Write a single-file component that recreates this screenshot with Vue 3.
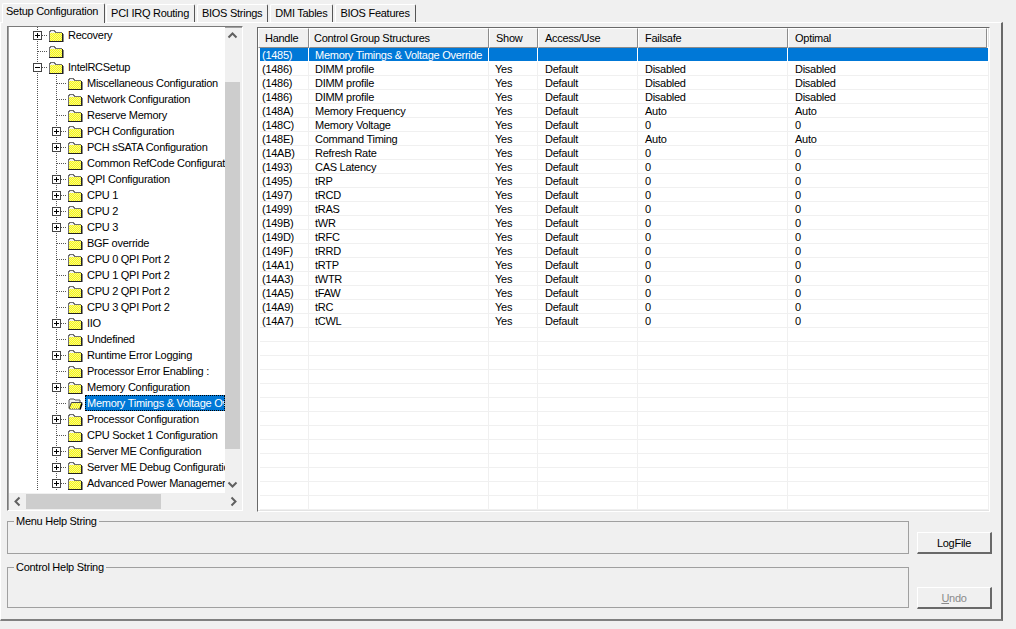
<script setup>
const tabs = ['Setup Configuration', 'PCI IRQ Routing', 'BIOS Strings', 'DMI Tables', 'BIOS Features']

const tree = [
  [1, 'Recovery', '+'],
  [1, '', ''],
  [1, 'IntelRCSetup', '-'],
  [2, 'Miscellaneous Configuration', ''],
  [2, 'Network Configuration', ''],
  [2, 'Reserve Memory', ''],
  [2, 'PCH Configuration', '+'],
  [2, 'PCH sSATA Configuration', '+'],
  [2, 'Common RefCode Configuration', ''],
  [2, 'QPI Configuration', '+'],
  [2, 'CPU 1', '+'],
  [2, 'CPU 2', '+'],
  [2, 'CPU 3', '+'],
  [2, 'BGF override', ''],
  [2, 'CPU 0 QPI Port 2', ''],
  [2, 'CPU 1 QPI Port 2', ''],
  [2, 'CPU 2 QPI Port 2', ''],
  [2, 'CPU 3 QPI Port 2', ''],
  [2, 'IIO', '+'],
  [2, 'Undefined', ''],
  [2, 'Runtime Error Logging', '+'],
  [2, 'Processor Error Enabling :', ''],
  [2, 'Memory Configuration', '+'],
  [2, 'Memory Timings & Voltage Override', '', true],
  [2, 'Processor Configuration', '+'],
  [2, 'CPU Socket 1 Configuration', ''],
  [2, 'Server ME Configuration', '+'],
  [2, 'Server ME Debug Configuration', '+'],
  [2, 'Advanced Power Management Configuration', '+'],
].map(([level, label, exp, selected], id) => ({ id, level, label, exp, selected: !!selected }))

const headers = ['Handle', 'Control Group Structures', 'Show', 'Access/Use', 'Failsafe', 'Optimal']

const data = [
  ['(1485)', 'Memory Timings & Voltage Override', '', '', '', ''],
  ['(1486)', 'DIMM profile', 'Yes', 'Default', 'Disabled', 'Disabled'],
  ['(1486)', 'DIMM profile', 'Yes', 'Default', 'Disabled', 'Disabled'],
  ['(1486)', 'DIMM profile', 'Yes', 'Default', 'Disabled', 'Disabled'],
  ['(148A)', 'Memory Frequency', 'Yes', 'Default', 'Auto', 'Auto'],
  ['(148C)', 'Memory Voltage', 'Yes', 'Default', '0', '0'],
  ['(148E)', 'Command Timing', 'Yes', 'Default', 'Auto', 'Auto'],
  ['(14AB)', 'Refresh Rate', 'Yes', 'Default', '0', '0'],
  ['(1493)', 'CAS Latency', 'Yes', 'Default', '0', '0'],
  ['(1495)', 'tRP', 'Yes', 'Default', '0', '0'],
  ['(1497)', 'tRCD', 'Yes', 'Default', '0', '0'],
  ['(1499)', 'tRAS', 'Yes', 'Default', '0', '0'],
  ['(149B)', 'tWR', 'Yes', 'Default', '0', '0'],
  ['(149D)', 'tRFC', 'Yes', 'Default', '0', '0'],
  ['(149F)', 'tRRD', 'Yes', 'Default', '0', '0'],
  ['(14A1)', 'tRTP', 'Yes', 'Default', '0', '0'],
  ['(14A3)', 'tWTR', 'Yes', 'Default', '0', '0'],
  ['(14A5)', 'tFAW', 'Yes', 'Default', '0', '0'],
  ['(14A9)', 'tRC', 'Yes', 'Default', '0', '0'],
  ['(14A7)', 'tCWL', 'Yes', 'Default', '0', '0'],
]
const rows = [...data, ...Array.from({ length: 13 }, () => ['', '', '', '', '', ''])]

// Checker rows of the folder body: one dashed line per pixel row.
const ditherRows = Array.from({ length: 8 }, (_, i) => `M${2 + (i % 2)} ${4.5 + i}H14`)
const openRows = Array.from({ length: 6 }, (_, i) => `M${5 - Math.floor(i / 2) + (i % 2)} ${6.5 + i}H14`)
</script>

<template>
  <div class="app">
    <nav class="tabs">
      <div v-for="(t, i) in tabs" :key="t" class="tab" :class="{ active: i === 0 }">{{ t }}</div>
    </nav>

    <section class="panel">
      <div class="top">
        <div class="tree">
          <div class="tree-view">
            <div class="tree-body">
              <div v-for="n in tree" :key="n.id" class="node">
                <span v-if="n.level === 2" class="cell guide"></span>
                <span class="cell elbow">
                  <svg v-if="n.exp" class="exp" width="9" height="9" viewBox="0 0 9 9" shape-rendering="crispEdges">
                    <rect x="0.5" y="0.5" width="8" height="8" fill="#fff" stroke="#444" />
                    <rect x="2" y="4" width="5" height="1" fill="#000" />
                    <rect v-if="n.exp === '+'" x="4" y="2" width="1" height="5" fill="#000" />
                  </svg>
                </span>
                <svg v-if="!n.selected" class="folder" width="16" height="13" viewBox="0 0 16 13" shape-rendering="crispEdges">
                  <path d="M1 2h1V1h5v1h1v1h6v9H1z" fill="#f2f2f2" />
                  <rect x="2" y="4" width="12" height="8" fill="#fafa10" />
                  <path v-for="d in ditherRows" :key="d" :d="d" stroke="#f6f690" stroke-dasharray="1 1" fill="none" />
                  <path d="M1.500 12V2.500h1v-1h4v1h1v1h6" fill="none" stroke="#707070" />
                  <path d="M14.500 3.500v9M1 12.500h14" fill="none" stroke="#222" />
                  <rect x="15" y="5" width="1" height="8" fill="#8a8a8a" />
                </svg>
                <svg v-else class="folder" width="16" height="13" viewBox="0 0 16 13">
                  <path d="M2 11V3l1-1h4l1 1h5v2" fill="#f2f2f2" stroke="#555" stroke-width="1" />
                  <path d="M2 11.500l2.500-6H15l-2 6.500H3z" fill="#fafa10" stroke="#444" stroke-width="1" />
                  <path v-for="d in openRows" :key="d" :d="d" stroke="#f6f690" stroke-dasharray="1 1" fill="none" shape-rendering="crispEdges" />
                  <path d="M13 12.500l2-6" stroke="#000" stroke-width="1.500" />
                </svg>
                <span class="label" :class="{ selected: n.selected }">{{ n.label }}</span>
              </div>
            </div>
            <div class="vbar">
              <svg class="arrow" width="15" height="17" viewBox="0 0 15 17"><path d="M3.500 10.500l4-4 4 4" fill="none" stroke="#606060" stroke-width="2" /></svg>
              <div class="vtrack"><div class="vthumb"></div></div>
              <svg class="arrow" width="15" height="17" viewBox="0 0 15 17"><path d="M3.500 6.500l4 4 4-4" fill="none" stroke="#606060" stroke-width="2" /></svg>
            </div>
          </div>
          <div class="hbar">
            <svg class="arrow" width="17" height="15" viewBox="0 0 17 15"><path d="M10.500 3.500l-4 4 4 4" fill="none" stroke="#606060" stroke-width="2" /></svg>
            <div class="htrack"><div class="hthumb"></div></div>
            <svg class="arrow" width="17" height="15" viewBox="0 0 17 15"><path d="M6.500 3.500l4 4-4 4" fill="none" stroke="#606060" stroke-width="2" /></svg>
          </div>
        </div>

        <div class="list">
          <div class="head">
            <div v-for="h in headers" :key="h" class="hcell">{{ h }}</div>
          </div>
          <div v-for="(r, i) in rows" :key="i" class="row" :class="{ sel: i === 0 }">
            <div v-for="(c, j) in r" :key="j" class="td">{{ c }}</div>
          </div>
        </div>
      </div>

      <div class="bottom">
        <div class="groups">
          <fieldset class="group g1"><legend>Menu Help String</legend></fieldset>
          <fieldset class="group g2"><legend>Control Help String</legend></fieldset>
        </div>
        <div class="buttons">
          <button class="btn" type="button">LogFile</button>
          <button class="btn" type="button" disabled><u>U</u>ndo</button>
        </div>
      </div>
    </section>
  </div>
</template>

<style>
html, body { margin: 0; background: #f0f0f0; overflow: hidden; }
</style>

<style scoped>
.app {
  width: 1016px;
  height: 629px;
  background: #f0f0f0;
  font: 11px/14px "Liberation Sans", Arial, sans-serif;
  letter-spacing: -0.27px;
  color: #000;
  overflow: hidden;
}

/* tabs */
.tabs {
  display: flex;
  align-items: flex-end;
  height: 22px;
  padding-left: 2px;
  gap: 2px;
  position: relative;
  z-index: 1;
}
.tab {
  height: 16px;
  padding: 1px 5px 0 4px;
  line-height: 15px;
  background: #f0f0f0;
  border-top: 1px solid #fff;
  border-left: 1px solid #fff;
  border-right: 1px solid #555;
  border-radius: 2px 2px 0 0;
  white-space: nowrap;
}
.tab.active {
  height: 19px;
  margin: 0 -1px -1px 0;
  padding: 0 6px 0 3px;
  line-height: 15px;
}

/* main panel */
.panel {
  width: 1000px;
  height: 596px;
  border-top: 1px solid #fff;
  border-left: 1px solid #fff;
  border-right: 2px solid #696969;
  border-bottom: 2px solid #808080;
  display: flex;
  flex-direction: column;
}
.top {
  display: flex;
  align-items: flex-start;
  padding: 3px 0 0 6px;
  gap: 14px;
}

/* tree */
.tree {
  width: 233px;
  height: 483px;
  border: 1px solid;
  border-color: #7a7a7a #fff #fff #7a7a7a;
  box-shadow: inset 1px 1px 0 #a0a0a0;
  padding: 0 0 0 1px;
  box-sizing: content-box;
  display: flex;
  flex-direction: column;
  flex: none;
}
.tree-view { display: flex; height: 466px; }
.tree-body {
  width: 216px;
  height: 466px;
  background: #fff;
  overflow: hidden;
  padding-left: 19px;
  box-sizing: border-box;
  flex: none;
}
.node {
  display: flex;
  align-items: flex-start;
  height: 16px;
  white-space: nowrap;
}
.cell {
  position: relative;
  display: block;
  width: 19px;
  height: 16px;
  flex: none;
  background-image: repeating-linear-gradient(to bottom, #555 0 1px, transparent 1px 2px);
  background-size: 1px 16px;
  background-position: 9px 0;
  background-repeat: no-repeat;
}
.elbow::after {
  content: "";
  position: absolute;
  left: 10px;
  top: 8px;
  width: 9px;
  height: 1px;
  background: repeating-linear-gradient(to right, #555 0 1px, transparent 1px 2px);
}
.exp { position: absolute; left: 5px; top: 4px; z-index: 1; }
.folder { flex: none; margin: 2px 0 0 1px; }
.label {
  margin-left: 2px;
  padding: 0 1px 0 2px;
  height: 16px;
  line-height: 16px;
  flex: none;
}
.label.selected {
  background: #0078d7;
  color: #fff;
  outline: 1px dotted #000;
  outline-offset: -1px;
  width: 140px;
  overflow: hidden;
  box-sizing: border-box;
}
.vbar { width: 17px; display: flex; flex-direction: column; flex: none; }
.vtrack { flex: 1; padding-top: 38px; }
.vthumb { width: 15px; height: 367px; background: #cdcdcd; }
.hbar { display: flex; height: 17px; align-items: center; }
.htrack { width: 216px; height: 15px; }
.hthumb { width: 135px; height: 15px; background: #cdcdcd; }
.arrow { display: block; flex: none; }

/* list */
.list {
  width: 729px;
  height: 483px;
  margin-top: 1px;
  border: 1px solid;
  border-color: #696969 #fff #fff #696969;
  box-shadow: inset -1px -1px 0 #e3e3e3;
  background: #fff;
  padding: 0 0 0 2px;
  overflow: hidden;
  flex: none;
  box-sizing: content-box;
}
.row {
  display: grid;
  grid-template-columns: 49px 180px 49px 100px 150px 201px;
  height: 14px;
}
.head {
  display: grid;
  height: 20px;
  margin-left: -2px;
  grid-template-columns: 51px 180px 49px 100px 150px 199px;
  border-bottom: 1px solid #fff;
  box-sizing: border-box;
}
.hcell {
  background: #f0f0f0;
  border-top: 1px solid #fff;
  border-left: 1px solid #fff;
  border-right: 1px solid #8c8c8c;
  border-bottom: 1px solid #8c8c8c;
  padding-left: 6px;
  line-height: 18px;
  white-space: nowrap;
}
.hcell:nth-child(2) { padding-left: 4px; }
.td {
  border-right: 1px solid #f0f0f0;
  border-bottom: 1px solid #f0f0f0;
  padding-left: 6px;
  line-height: 14px;
  white-space: nowrap;
  overflow: hidden;
  box-sizing: border-box;
}
.td:first-child { padding-left: 2px; }
.td:nth-child(n+4) { padding-left: 7px; }
.row.sel .td {
  background: #0078d7;
  color: #fff;
  border-bottom-color: #fff;
  border-right-color: #fff;
}

/* bottom */
.bottom {
  display: flex;
  padding: 2px 0 0 6px;
  gap: 8px;
}
.groups { width: 902px; display: flex; flex-direction: column; gap: 6px; flex: none; }
.group {
  margin: 0;
  padding: 0;
  min-width: 0;
  border: 1px solid #a0a0a0;
  box-sizing: border-box;
  width: 902px;
}
.g1 { height: 40px; }
.g2 { height: 48px; }
.group legend {
  margin-left: 6px;
  padding: 0 2px;
  line-height: 14px;
}
.buttons {
  display: flex;
  flex-direction: column;
  gap: 33px;
  padding-top: 18px;
}
.btn {
  width: 75px;
  height: 22px;
  padding: 0;
  background: #f0f0f0;
  border: 0;
  border-top: 1px solid #fff;
  border-left: 1px solid #fff;
  border-right: 2px solid #696969;
  border-bottom: 2px solid #696969;
  font: 11px/14px "Liberation Sans", Arial, sans-serif;
  letter-spacing: -0.27px;
  color: #000;
}
.btn:disabled { color: #8a8a8a; }
</style>
